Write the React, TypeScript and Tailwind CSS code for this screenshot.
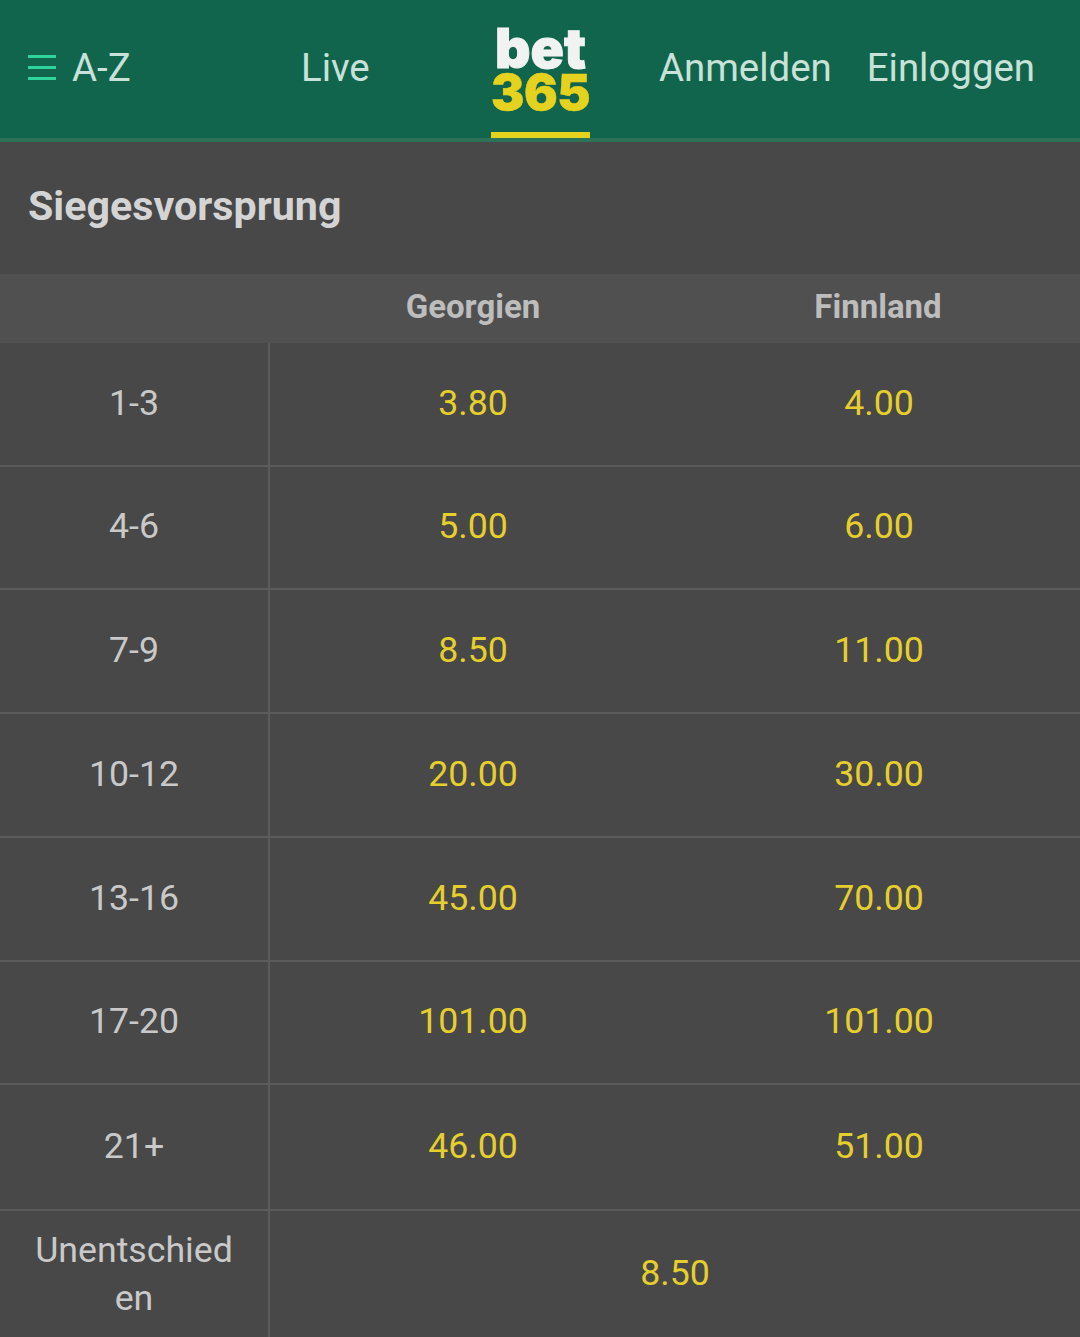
const rows = [
  { label: "1-3", a: "3.80", b: "4.00", h: "h-[124px]" },
  { label: "4-6", a: "5.00", b: "6.00", h: "h-[123px]" },
  { label: "7-9", a: "8.50", b: "11.00", h: "h-[124px]" },
  { label: "10-12", a: "20.00", b: "30.00", h: "h-[124px]" },
  { label: "13-16", a: "45.00", b: "70.00", h: "h-[124px]" },
  { label: "17-20", a: "101.00", b: "101.00", h: "h-[123px]" },
  { label: "21+", a: "46.00", b: "51.00", h: "h-[126px]" },
];

function Menu() {
  return (
    <svg width="28" height="26" viewBox="0 0 28 26" className="mr-[16px]">
      <rect x="0" y="0" width="28" height="3" fill="#2fd39b" />
      <rect x="0" y="11" width="28" height="3" fill="#2fd39b" />
      <rect x="0" y="22" width="28" height="3" fill="#2fd39b" />
    </svg>
  );
}

export default function App() {
  return (
    <div className="w-[1080px] h-[1337px] overflow-hidden bg-[#484848] font-['Roboto',sans-serif]">
      <header className="relative h-[142px] bg-[#12654d] border-b-[4px] border-[#2c7259] flex items-center text-[38.4px] text-[#c9e2d9] pb-[2px]">
        <div className="w-[301px] pl-[28px] flex items-center">
          <Menu />
          <span>A-Z</span>
        </div>
        <span>Live</span>
        <div className="absolute left-[491px] top-0 w-[99px] h-[138px] border-b-[6px] border-[#e5d21f] flex flex-col items-center font-['Inter',sans-serif] font-black leading-none">
          <span className="text-[55px] text-[#f1f3f2] [-webkit-text-stroke:1px_#f1f3f2] tracking-[0px] mt-[26px] h-[44px] leading-[44px]">bet</span>
          <span className="text-[50px] text-[#e5d21f] [-webkit-text-stroke:0.5px_#e5d21f] tracking-[-0.5px] h-[44px] leading-[44px]">365</span>
        </div>
        <span className="ml-auto mr-[35px]">Anmelden</span>
        <span className="mr-[45px]">Einloggen</span>
      </header>
      <div className="h-[132px] pl-[28px] pb-[2px] flex items-center text-[41.2px] font-bold text-[#d4d4d4]">Siegesvorsprung</div>
      <div className="h-[69px] bg-[#505050] pb-[4px] flex items-center text-[33px] font-bold text-[#bdbdbd]">
        <div className="w-[270px]" />
        <div className="w-[406px] text-center">Georgien</div>
        <div className="w-[404px] text-center">Finnland</div>
      </div>
      {rows.map((r) => (
        <div key={r.label} className={`${r.h} flex items-center border-b-[2px] border-[#5b5b5b] text-[35.7px]`}>
          <div className="w-[270px] h-full pb-[1px] border-r-[2px] border-[#5b5b5b] flex items-center justify-center text-[#c9c9c9]">{r.label}</div>
          <div className="w-[406px] pb-[1px] text-center text-[#e6cf2c]">{r.a}</div>
          <div className="w-[404px] pl-[2px] pb-[1px] text-center text-[#e6cf2c]">{r.b}</div>
        </div>
      ))}
      <div className="h-[127px] flex items-center text-[35.7px]">
        <div className="w-[270px] h-full pb-[2px] border-r-[2px] border-[#5b5b5b] flex items-center justify-center text-center leading-[48px] text-[#c9c9c9]">
          <span>
            Unentschied
            <br />
            en
          </span>
        </div>
        <div className="w-[810px] pb-[2px] text-center text-[#e6cf2c]">8.50</div>
      </div>
    </div>
  );
}
